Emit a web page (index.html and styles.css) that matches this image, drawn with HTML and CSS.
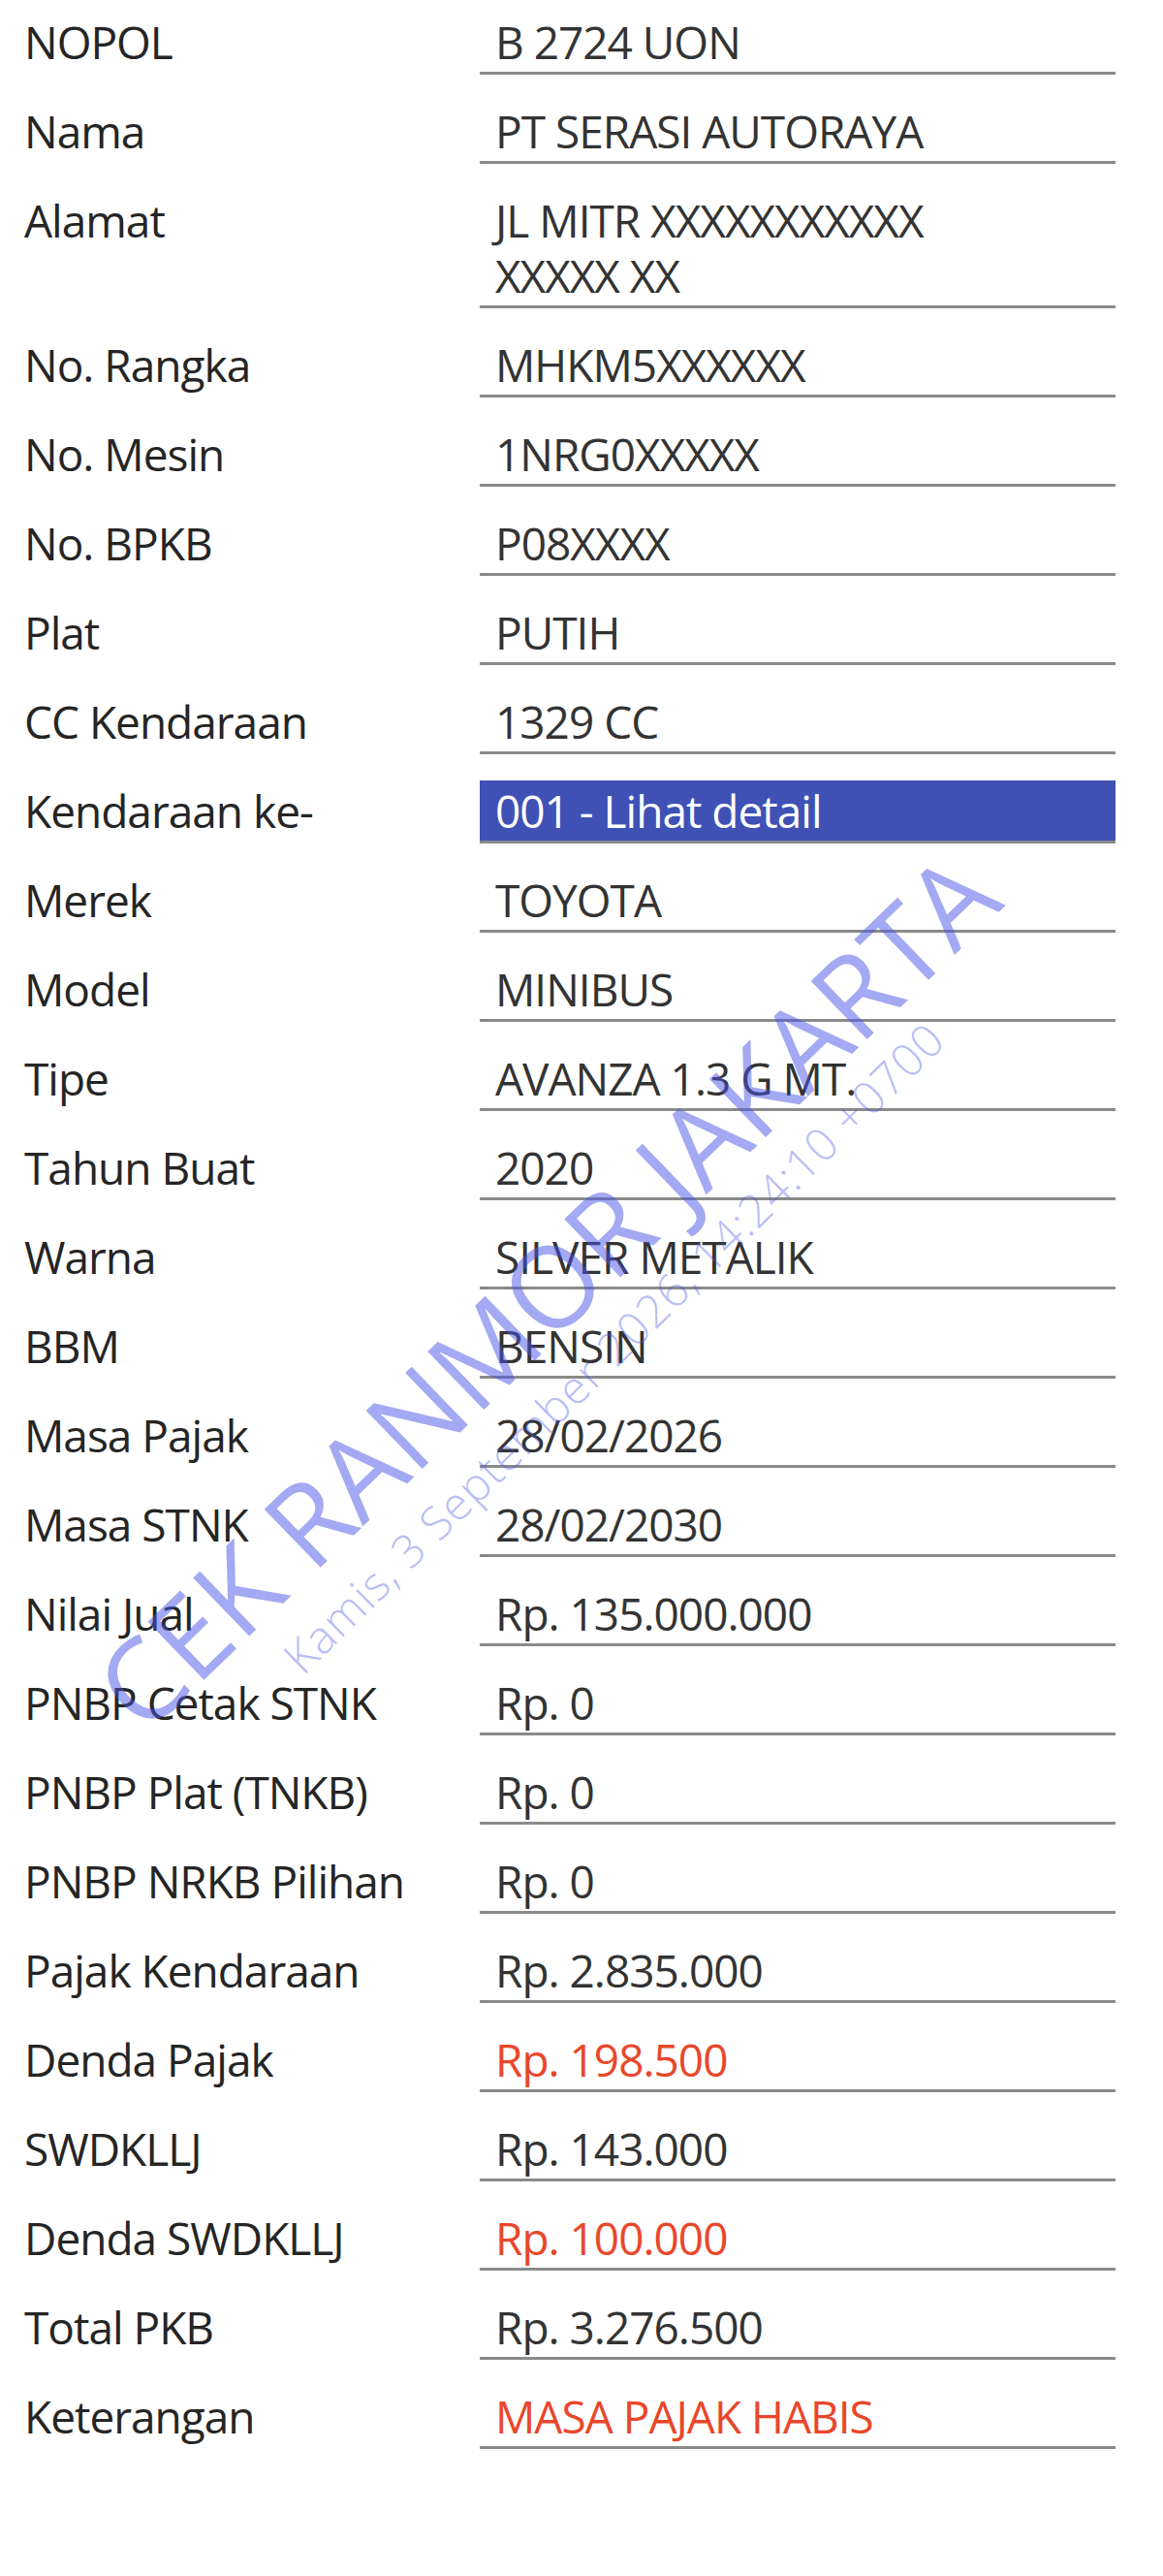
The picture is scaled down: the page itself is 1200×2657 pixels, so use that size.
FILE: index.html
```html
<!DOCTYPE html>
<html lang="id">
<head>
<meta charset="utf-8">
<title>Cek Ranmor Jakarta</title>
<link rel="stylesheet" href="styles.css">
</head>
<body>
<div class="page">
  <div class="list">
    <div class="row"><div class="label">NOPOL</div><div class="value">B 2724 UON</div></div>
    <div class="row"><div class="label">Nama</div><div class="value">PT SERASI AUTORAYA</div></div>
    <div class="row"><div class="label">Alamat</div><div class="value">JL MITR XXXXXXXXXXX<br>XXXXX XX</div></div>
    <div class="row"><div class="label">No. Rangka</div><div class="value">MHKM5XXXXXX</div></div>
    <div class="row"><div class="label">No. Mesin</div><div class="value">1NRG0XXXXX</div></div>
    <div class="row"><div class="label">No. BPKB</div><div class="value">P08XXXX</div></div>
    <div class="row"><div class="label">Plat</div><div class="value">PUTIH</div></div>
    <div class="row"><div class="label">CC Kendaraan</div><div class="value">1329 CC</div></div>
    <div class="row"><div class="label">Kendaraan ke-</div><div class="value value-link">001 - Lihat detail</div></div>
    <div class="row"><div class="label">Merek</div><div class="value">TOYOTA</div></div>
    <div class="row"><div class="label">Model</div><div class="value">MINIBUS</div></div>
    <div class="row"><div class="label">Tipe</div><div class="value">AVANZA 1.3 G MT.</div></div>
    <div class="row"><div class="label">Tahun Buat</div><div class="value">2020</div></div>
    <div class="row"><div class="label">Warna</div><div class="value">SILVER METALIK</div></div>
    <div class="row"><div class="label">BBM</div><div class="value">BENSIN</div></div>
    <div class="row"><div class="label">Masa Pajak</div><div class="value">28/02/2026</div></div>
    <div class="row"><div class="label">Masa STNK</div><div class="value">28/02/2030</div></div>
    <div class="row"><div class="label">Nilai Jual</div><div class="value">Rp. 135.000.000</div></div>
    <div class="row"><div class="label">PNBP Cetak STNK</div><div class="value">Rp. 0</div></div>
    <div class="row"><div class="label">PNBP Plat (TNKB)</div><div class="value">Rp. 0</div></div>
    <div class="row"><div class="label">PNBP NRKB Pilihan</div><div class="value">Rp. 0</div></div>
    <div class="row"><div class="label">Pajak Kendaraan</div><div class="value">Rp. 2.835.000</div></div>
    <div class="row"><div class="label">Denda Pajak</div><div class="value value-alert">Rp. 198.500</div></div>
    <div class="row"><div class="label">SWDKLLJ</div><div class="value">Rp. 143.000</div></div>
    <div class="row"><div class="label">Denda SWDKLLJ</div><div class="value value-alert">Rp. 100.000</div></div>
    <div class="row"><div class="label">Total PKB</div><div class="value">Rp. 3.276.500</div></div>
    <div class="row"><div class="label">Keterangan</div><div class="value value-alert">MASA PAJAK HABIS</div></div>
  </div>
  <div class="watermark watermark-main">CEK RANMOR JAKARTA</div>
  <div class="watermark watermark-stamp">Kamis, 3 September 2026, 14:24:10 +0700</div>
</div>
</body>
</html>
```
FILE: styles.css
```css
html, body {
  margin: 0;
  padding: 0;
  background: #ffffff;
}

.page {
  position: relative;
  width: 1200px;
  height: 2657px;
  overflow: hidden;
  font-family: "Open Sans", "Noto Sans", sans-serif;
  font-size: 46px;
  color: #2b2b2b;
}

.list {
  display: flex;
  flex-direction: column;
  gap: 27px;
  padding: 12px 0 0 25px;
  letter-spacing: -1px;
}

.row {
  display: flex;
  align-items: flex-start;
}

.label {
  width: 470px;
  flex: none;
  padding-top: 3px;
  line-height: 57px;
  color: #252525;
}

.value {
  width: 624px;
  flex: none;
  padding: 3px 16px 2px 16px;
  line-height: 57px;
  color: #333333;
  border-bottom: 3px solid #8a8a8a;
}

.value-link {
  background: #3f51b5;
  color: #ffffff;
}

.value-alert {
  color: #e9472a;
}

.watermark {
  position: absolute;
  white-space: nowrap;
  pointer-events: none;
  line-height: 1;
}

.watermark-main {
  left: 562px;
  top: 1330px;
  font-size: 117px;
  font-weight: 400;
  color: rgba(72, 84, 230, 0.5);
  transform: translate(-50%, -50%) rotate(-44deg);
}

.watermark-stamp {
  left: 633px;
  top: 1390px;
  font-size: 47px;
  font-weight: 300;
  letter-spacing: 1px;
  color: rgba(72, 84, 230, 0.4);
  transform: translate(-50%, -50%) rotate(-44.5deg);
}
```
